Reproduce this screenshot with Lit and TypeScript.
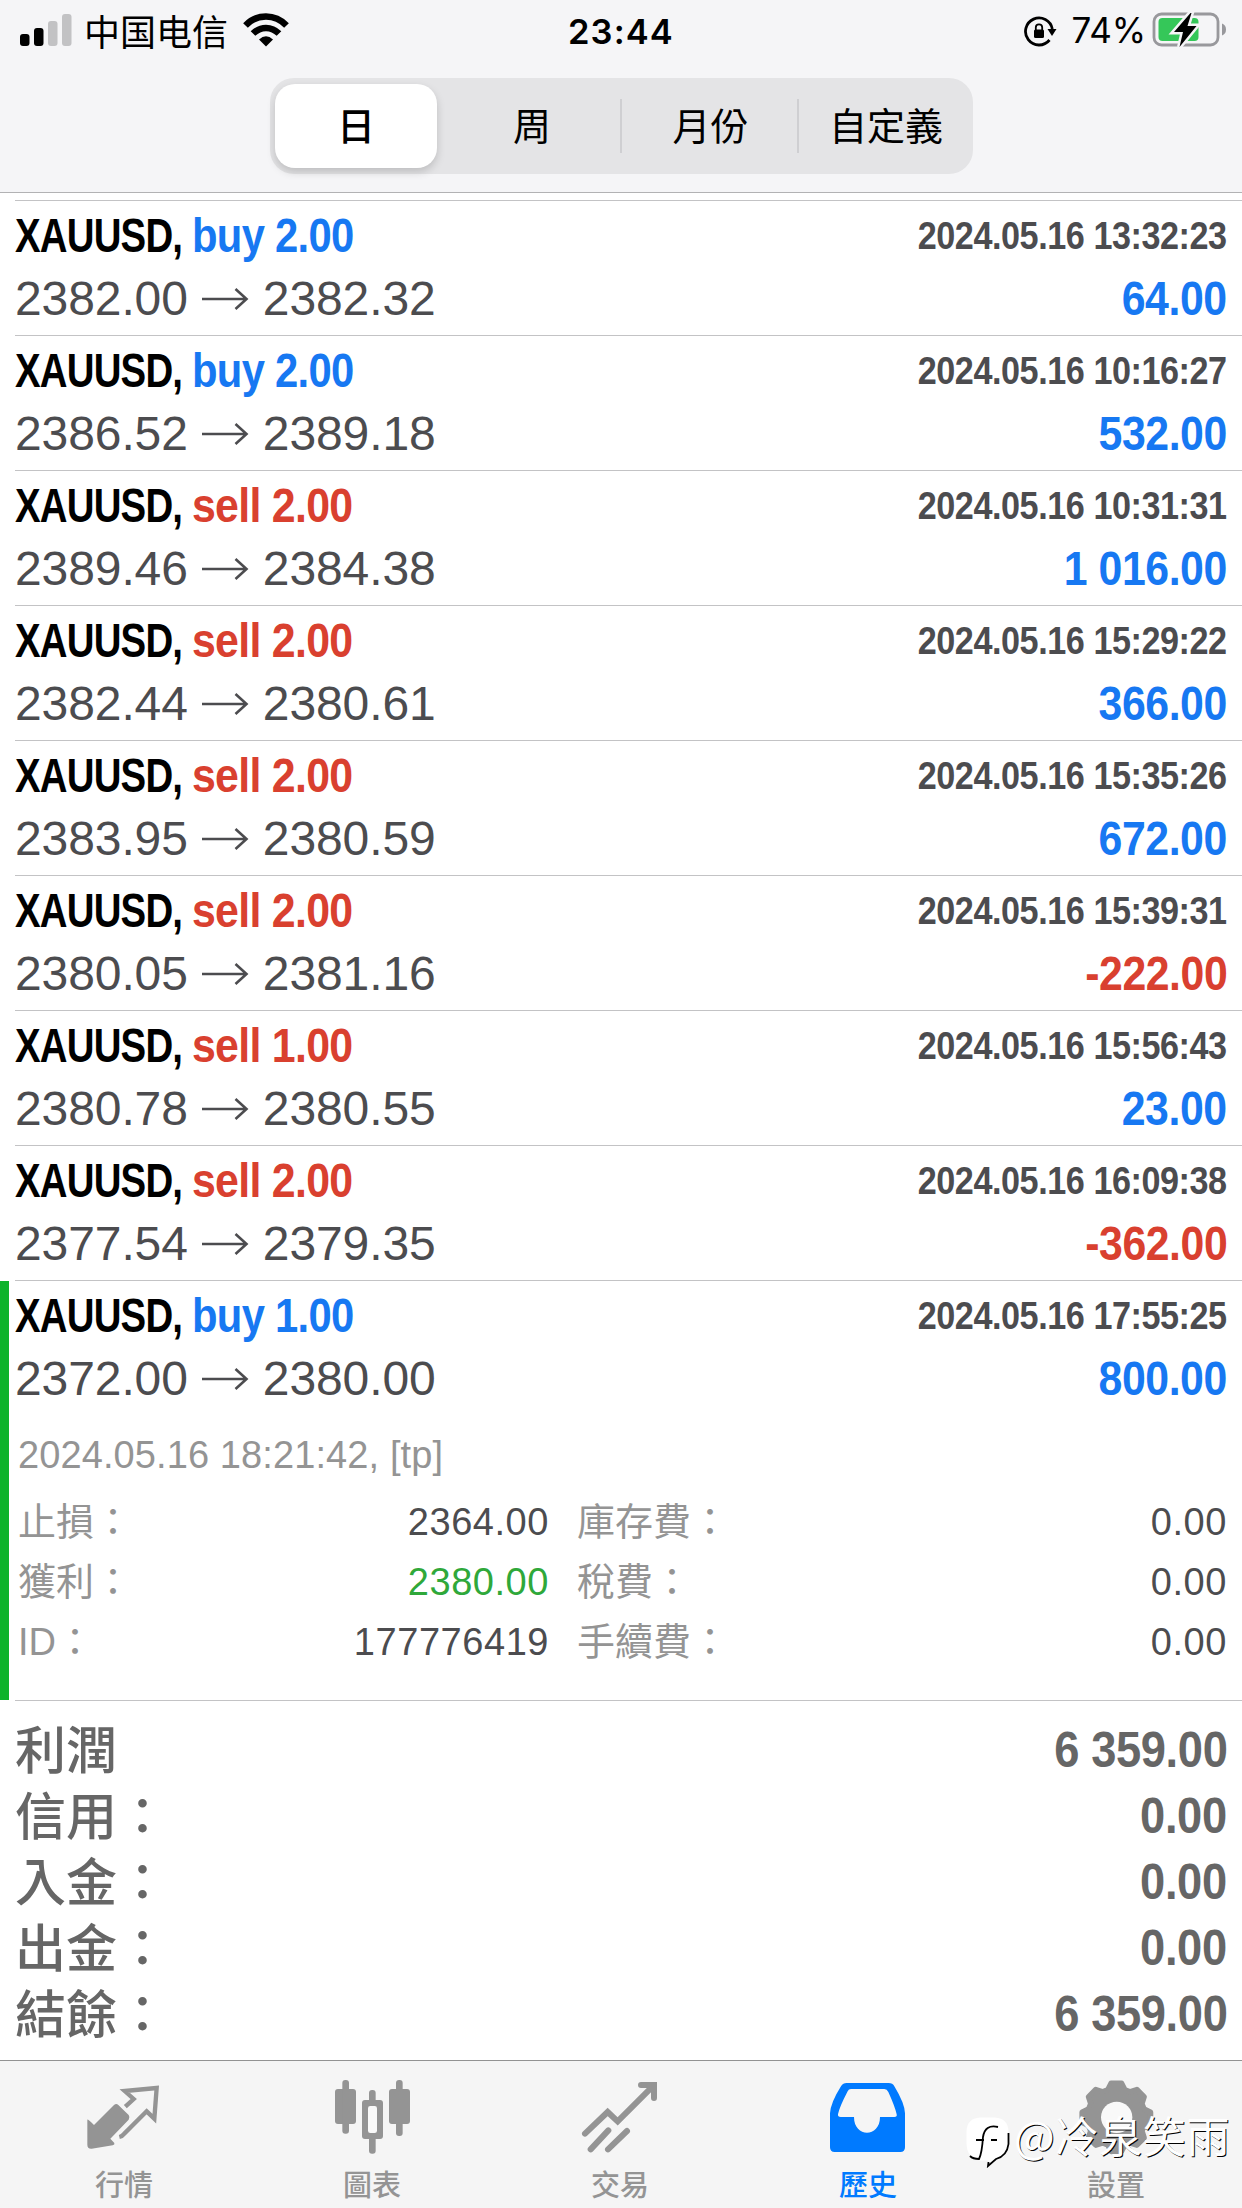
import { LitElement, html, css, svg } from "lit";
import { customElement } from "lit/decorators.js";

interface Deal {
  side: "buy" | "sell";
  volume: string;
  open: string;
  close: string;
  time: string;
  profit: string;
}

const DEALS: Deal[] = [
  { side: "buy", volume: "2.00", open: "2382.00", close: "2382.32", time: "2024.05.16 13:32:23", profit: "64.00" },
  { side: "buy", volume: "2.00", open: "2386.52", close: "2389.18", time: "2024.05.16 10:16:27", profit: "532.00" },
  { side: "sell", volume: "2.00", open: "2389.46", close: "2384.38", time: "2024.05.16 10:31:31", profit: "1 016.00" },
  { side: "sell", volume: "2.00", open: "2382.44", close: "2380.61", time: "2024.05.16 15:29:22", profit: "366.00" },
  { side: "sell", volume: "2.00", open: "2383.95", close: "2380.59", time: "2024.05.16 15:35:26", profit: "672.00" },
  { side: "sell", volume: "2.00", open: "2380.05", close: "2381.16", time: "2024.05.16 15:39:31", profit: "-222.00" },
  { side: "sell", volume: "1.00", open: "2380.78", close: "2380.55", time: "2024.05.16 15:56:43", profit: "23.00" },
  { side: "sell", volume: "2.00", open: "2377.54", close: "2379.35", time: "2024.05.16 16:09:38", profit: "-362.00" },
  { side: "buy", volume: "1.00", open: "2372.00", close: "2380.00", time: "2024.05.16 17:55:25", profit: "800.00" },
];

const DETAILS = [
  ["止損：", "2364.00", "庫存費：", "0.00"],
  ["獲利：", "2380.00", "稅費：", "0.00"],
  ["ID：", "177776419", "手續費：", "0.00"],
];

const TOTALS = [
  ["利潤", "6 359.00"],
  ["信用：", "0.00"],
  ["入金：", "0.00"],
  ["出金：", "0.00"],
  ["結餘：", "6 359.00"],
];

const gearPath = (() => {
  const cx = 559, cy = 202, n = 8;
  const pts: string[] = [];
  for (let i = 0; i < n; i++) {
    const a = (i * 2 * Math.PI) / n - Math.PI / 2;
    for (const [r, d] of [[87, -0.3], [104, -0.15], [104, 0.15], [87, 0.3]]) {
      pts.push(`${(cx + r * Math.cos(a + d)).toFixed(1)} ${(cy + r * Math.sin(a + d)).toFixed(1)}`);
    }
  }
  return `M${pts.join("L")}Z`;
})();

const TABS = [
  {
    label: "行情", x: 246,
    icon: svg`<path d="M262 209Q263 207 282 225L342 165Q349 159 355 165L386 195Q391 202 386 209L331 266L343 279Q345 284 338 286L275 296Q262 297 262 284Z" fill="currentColor"/>
      <path d="M376 170L401 147L374 123L470 114L463 206L440 184L372 252Q367 259 358 261" fill="none" stroke="currentColor" stroke-width="13" stroke-linejoin="miter"/>`,
  },
  {
    label: "圖表", x: 990,
    icon: svg`<g fill="currentColor"><rect x="1005" y="117" width="63" height="105" rx="9"/><rect x="1027" y="90" width="20" height="161" rx="9"/>
      <rect x="1167" y="117" width="63" height="105" rx="9"/><rect x="1188" y="90" width="20" height="168" rx="9"/>
      <rect x="1086" y="150" width="63" height="117" rx="9"/><rect x="1107" y="120" width="20" height="191" rx="9"/></g>
      <rect x="1104" y="168" width="27" height="81" rx="7" fill="#f9f9f9"/>`,
  },
  {
    label: "交易", x: 384,
    icon: svg`<path d="M405 251L473 186L503 214L611 106M573 105H612V144M422 298L475 241M474 298L531 243" fill="none" stroke="currentColor" stroke-width="18" stroke-linejoin="miter" stroke-linecap="round"/>`,
  },
  {
    label: "歷史", x: 1128,
    icon: svg`<path fill-rule="evenodd" fill="currentColor" d="M1190 99H1316Q1328 99 1333 109Q1364 160 1365 190V292Q1365 306 1351 306H1154Q1140 306 1140 292V190Q1142 158 1173 109Q1179 99 1190 99ZM1203 117Q1196 117 1193 124Q1168 172 1164 193Q1163 201 1172 201H1212C1212 264 1290 264 1290 201H1333Q1342 201 1340 193Q1335 170 1315 126Q1311 117 1303 117Z"/>`,
  },
  {
    label: "設置", x: 432,
    icon: svg`<path d="${gearPath}" fill="currentColor" stroke="currentColor" stroke-width="16" stroke-linejoin="round"/><circle cx="560" cy="202" r="47" fill="#f9f9f9"/>`,
  },
];

@customElement("app-root")
export class AppRoot extends LitElement {
  static styles = css`
    :host {
      display: block;
      position: relative;
      width: 1242px;
      height: 2208px;
      overflow: hidden;
      background: #fff;
      color: #4c4c4f;
      font-family: "Liberation Sans", "Noto Sans CJK TC", sans-serif;
    }
    * { box-sizing: border-box; }
    .page { display: flex; flex-direction: column; height: 2208px; }
    svg { display: block; flex: none; }

    .header { height: 193px; background: #f5f5f7; border-bottom: 1px solid #b2b2b4; }
    .status {
      height: 78px;
      padding: 12px 16px 0 20px;
      display: grid;
      grid-template-columns: 548px auto 1fr;
      align-items: start;
      color: #000;
    }
    .left, .right { display: flex; align-items: center; height: 36px; }
    .right { justify-content: flex-end; }
    .carrier { margin-left: 12px; font: 400 36px/36px "Noto Sans CJK SC", sans-serif; }
    .wifi { margin-left: 15px; }
    .clock { font: 600 34.5px/39px Inter, sans-serif; letter-spacing: 1.1px; }
    .percent { margin: 0 6px 0 15px; font: 400 35px/39px Inter, sans-serif; letter-spacing: -0.1px; }

    .segments {
      width: 703px;
      height: 96px;
      margin-left: 270px;
      padding: 6px 0 6px 5px;
      display: grid;
      grid-template-columns: 162px 185px 177px 174px;
      border-radius: 24px;
      background: #e4e4e6;
      color: #000;
    }
    .segment {
      display: flex;
      align-items: center;
      justify-content: center;
      padding-bottom: 4px;
      font: 400 38px/50px "Noto Sans CJK TC", sans-serif;
    }
    .segment.on { border-radius: 20px; background: #fff; box-shadow: 0 4px 8px rgba(0, 0, 0, 0.17); font-weight: 500; }
    .segment.ruled { background: linear-gradient(#cfcfd2, #cfcfd2) right center / 2px 54px no-repeat; }
    .segment:nth-child(2) { padding-left: 5px; }

    .deals { padding-top: 7px; }
    .deal { position: relative; padding: 0 15px; height: 135px; }
    .deal::before, .totals::before {
      content: "";
      display: block;
      height: 1px;
      margin-right: -15px;
      background: #c3c3c5;
    }
    .deal.open { height: 420px; }
    .deal.open::after {
      content: "";
      position: absolute;
      left: 0;
      top: 1px;
      width: 9px;
      height: 419px;
      background: #0db32b;
    }
    .line { display: flex; justify-content: space-between; align-items: center; white-space: pre; }
    .title { height: 70px; line-height: 70px; }
    .values { height: 56px; line-height: 56px; font-size: 48px; letter-spacing: -0.1px; }
    .heading { display: flex; }

    /* Condensed bold: each run is squeezed towards the edge it is aligned to. */
    .narrow { display: block; font-weight: 700; transform-origin: left center; }
    .symbol { width: 177px; font-size: 48px; color: #000; letter-spacing: -1px; transform: scaleX(0.8); }
    .side { font-size: 48px; letter-spacing: -0.8px; transform: scaleX(0.87); }
    .side.sell { transform: scaleX(0.893); }
    .time { font-size: 39px; letter-spacing: -0.5px; transform-origin: right center; transform: scaleX(0.876); }
    .profit { font-size: 48px; letter-spacing: -0.5px; transform-origin: right center; transform: scaleX(0.892); }
    .sum { letter-spacing: -0.4px; line-height: 67px; transform-origin: right center; transform: scaleX(0.905); }

    .buy, .gain { color: #1778f2; }
    .sell, .loss { color: #d9402f; }
    .prices { display: flex; align-items: center; }
    .prices svg { margin: 0 14px 0 13px; }

    .closing {
      margin: 18px 0 7px;
      padding-left: 3px;
      font-size: 38px;
      line-height: 60px;
      letter-spacing: 0.1px;
      color: #949494;
    }
    .detail {
      display: grid;
      grid-template-columns: 531px 1fr;
      column-gap: 28px;
      padding-left: 3px;
      font-size: 38px;
      line-height: 60px;
      height: 60px;
    }
    .pair { display: flex; justify-content: space-between; }
    .label { color: #949494; }
    .figure { letter-spacing: 0.55px; }
    .take { color: #2fa83a; }

    .totals { padding: 0 15px; height: 360px; color: #666; }
    .total {
      display: flex;
      justify-content: space-between;
      height: 66px;
      line-height: 66px;
      font-size: 50px;
    }
    .total:first-of-type { margin-top: 16px; }
    .name { font: 500 51px/60px "Noto Sans CJK TC", sans-serif; }

    .tabs {
      flex: 1;
      display: grid;
      grid-template-columns: repeat(5, 248px);
      background: #f5f5f5;
      border-top: 1px solid #929292;
      color: #949494;
    }
    .tab { display: flex; flex-direction: column; align-items: center; padding-top: 14px; }
    .tab.on { color: #007aff; }
    .caption { margin: 4px 0 0; font: 500 29px/40px "Noto Sans CJK TC", sans-serif; }

    .credit {
      position: absolute;
      left: 966px;
      top: 2116px;
      display: flex;
      align-items: flex-start;
      gap: 4px;
      color: #fff;
      font: 400 43px/36px "Noto Sans CJK SC", sans-serif;
      letter-spacing: 0.7px;
      text-shadow: 1px 1px 0 #000;
      white-space: nowrap;
    }
  `;

  private deal(d: Deal, expanded: boolean) {
    return html`<div class="deal ${expanded ? "open" : ""}">
      <div class="line title">
        <div class="heading"><span class="narrow symbol">XAUUSD,</span><span class="narrow side ${d.side}">${d.side} ${d.volume}</span></div>
        <span class="narrow time">${d.time}</span>
      </div>
      <div class="line values">
        <span class="prices">${d.open}<svg width="48" height="24" viewBox="0 0 48 24"><path d="M1 12H45.500M34.500 2L45.500 12L34.500 22" fill="none" stroke="#4c4c4f" stroke-width="2.600"/></svg>${d.close}</span>
        <span class="narrow profit ${d.profit.startsWith("-") ? "loss" : "gain"}">${d.profit}</span>
      </div>
      ${expanded
        ? html`<div class="closing">2024.05.16 18:21:42, [tp]</div>
            ${DETAILS.map(
              ([a, b, c, e], i) => html`<div class="detail">
                <div class="pair"><span class="label">${a}</span><span class="figure ${i === 1 ? "take" : ""}">${b}</span></div>
                <div class="pair"><span class="label">${c}</span><span class="figure">${e}</span></div>
              </div>`
            )}`
        : ""}
    </div>`;
  }

  render() {
    return html`<div class="page">
      <div class="header">
        <div class="status">
          <div class="left">
            <svg width="52" height="36" viewBox="0 0 52 36">
              <rect x="0" y="22" width="9.500" height="12" rx="3"/><rect x="14" y="16" width="9.500" height="18" rx="3"/>
              <rect x="28" y="9" width="9.500" height="25" rx="3" fill="#c2c2c4"/><rect x="42" y="2" width="9.500" height="32" rx="3" fill="#c2c2c4"/>
            </svg>
            <span class="carrier">中国电信</span>
            <svg class="wifi" width="46" height="36" viewBox="0 0 46 36">
              <g fill="none" stroke="#000" stroke-width="6.500"><path d="M2.500 13.500C14 1.500 32 1.500 43.500 13.500"/><path d="M10 21.500C17.500 14 28.500 14 36 21.500"/></g>
              <path d="M16 27.500Q23 21 30 27.500L23 34.500Z"/>
            </svg>
          </div>
          <span class="clock">23:44</span>
          <div class="right">
            <svg width="33" height="36" viewBox="0 0 33 36">
              <path d="M25.500 28A13.500 13.500 0 1 1 28.300 17" fill="none" stroke="#000" stroke-width="2.800"/>
              <path d="M23.500 17H32.500L28 24Z"/><rect x="10" y="17.500" width="10" height="8.500" rx="1.500"/>
              <path d="M11.800 19V15.500a3.200 3.200 0 0 1 6.400 0V19" fill="none" stroke="#000" stroke-width="1.800"/>
            </svg>
            <span class="percent">74%</span>
            <svg width="74" height="38" viewBox="0 0 74 38">
              <rect x="2" y="3" width="64" height="31" rx="7.500" fill="none" stroke="#98989c" stroke-width="2.800"/>
              <path d="M70 12.500Q74 14 74 18.500T70 24.500Z" fill="#98989c"/>
              <rect x="6.500" y="7" width="40" height="23" rx="4" fill="#35c759"/>
              <path d="M38.500 2L22 21H31L27.500 36L44.500 15H35.500L39.500 2Z" stroke="#f5f5f7" stroke-width="5" paint-order="stroke"/>
            </svg>
          </div>
        </div>
        <div class="segments">
          <div class="segment on">日</div>
          <div class="segment ruled">周</div>
          <div class="segment ruled">月份</div>
          <div class="segment">自定義</div>
        </div>
      </div>
      <div class="deals">${DEALS.map((d, i) => this.deal(d, i === DEALS.length - 1))}</div>
      <div class="totals">
        ${TOTALS.map(([n, v]) => html`<div class="total"><span class="name">${n}</span><span class="narrow sum">${v}</span></div>`)}
      </div>
      <div class="tabs">
        ${TABS.map(
          (t, i) => html`<div class="tab ${i === 3 ? "on" : ""}">
            <svg width="84" height="84" viewBox="${t.x} 75 252 252">${t.icon}</svg>
            <span class="caption">${t.label}</span>
          </div>`
        )}
      </div>
      <div class="credit">
        <svg width="44" height="52" viewBox="0 0 44 52">
          <path d="M14 1.500H29Q42 2.500 42.500 15V27Q42 40 30 43L22 50L22.500 44.500H14Q1 42 0.500 28V15Q1 2.500 14 1.500Z" fill="#fff"/>
          <path d="M32 11Q19 8 17 21Q16 37 13 43Q7 43 4 40M10 24H18M25 24H31M42.500 17V28Q41 40 30 43L22 50L22.500 46" fill="none" stroke="#000" stroke-width="1.800"/>
        </svg>
        <span>@冷泉笑雨</span>
      </div>
    </div>`;
  }
}
